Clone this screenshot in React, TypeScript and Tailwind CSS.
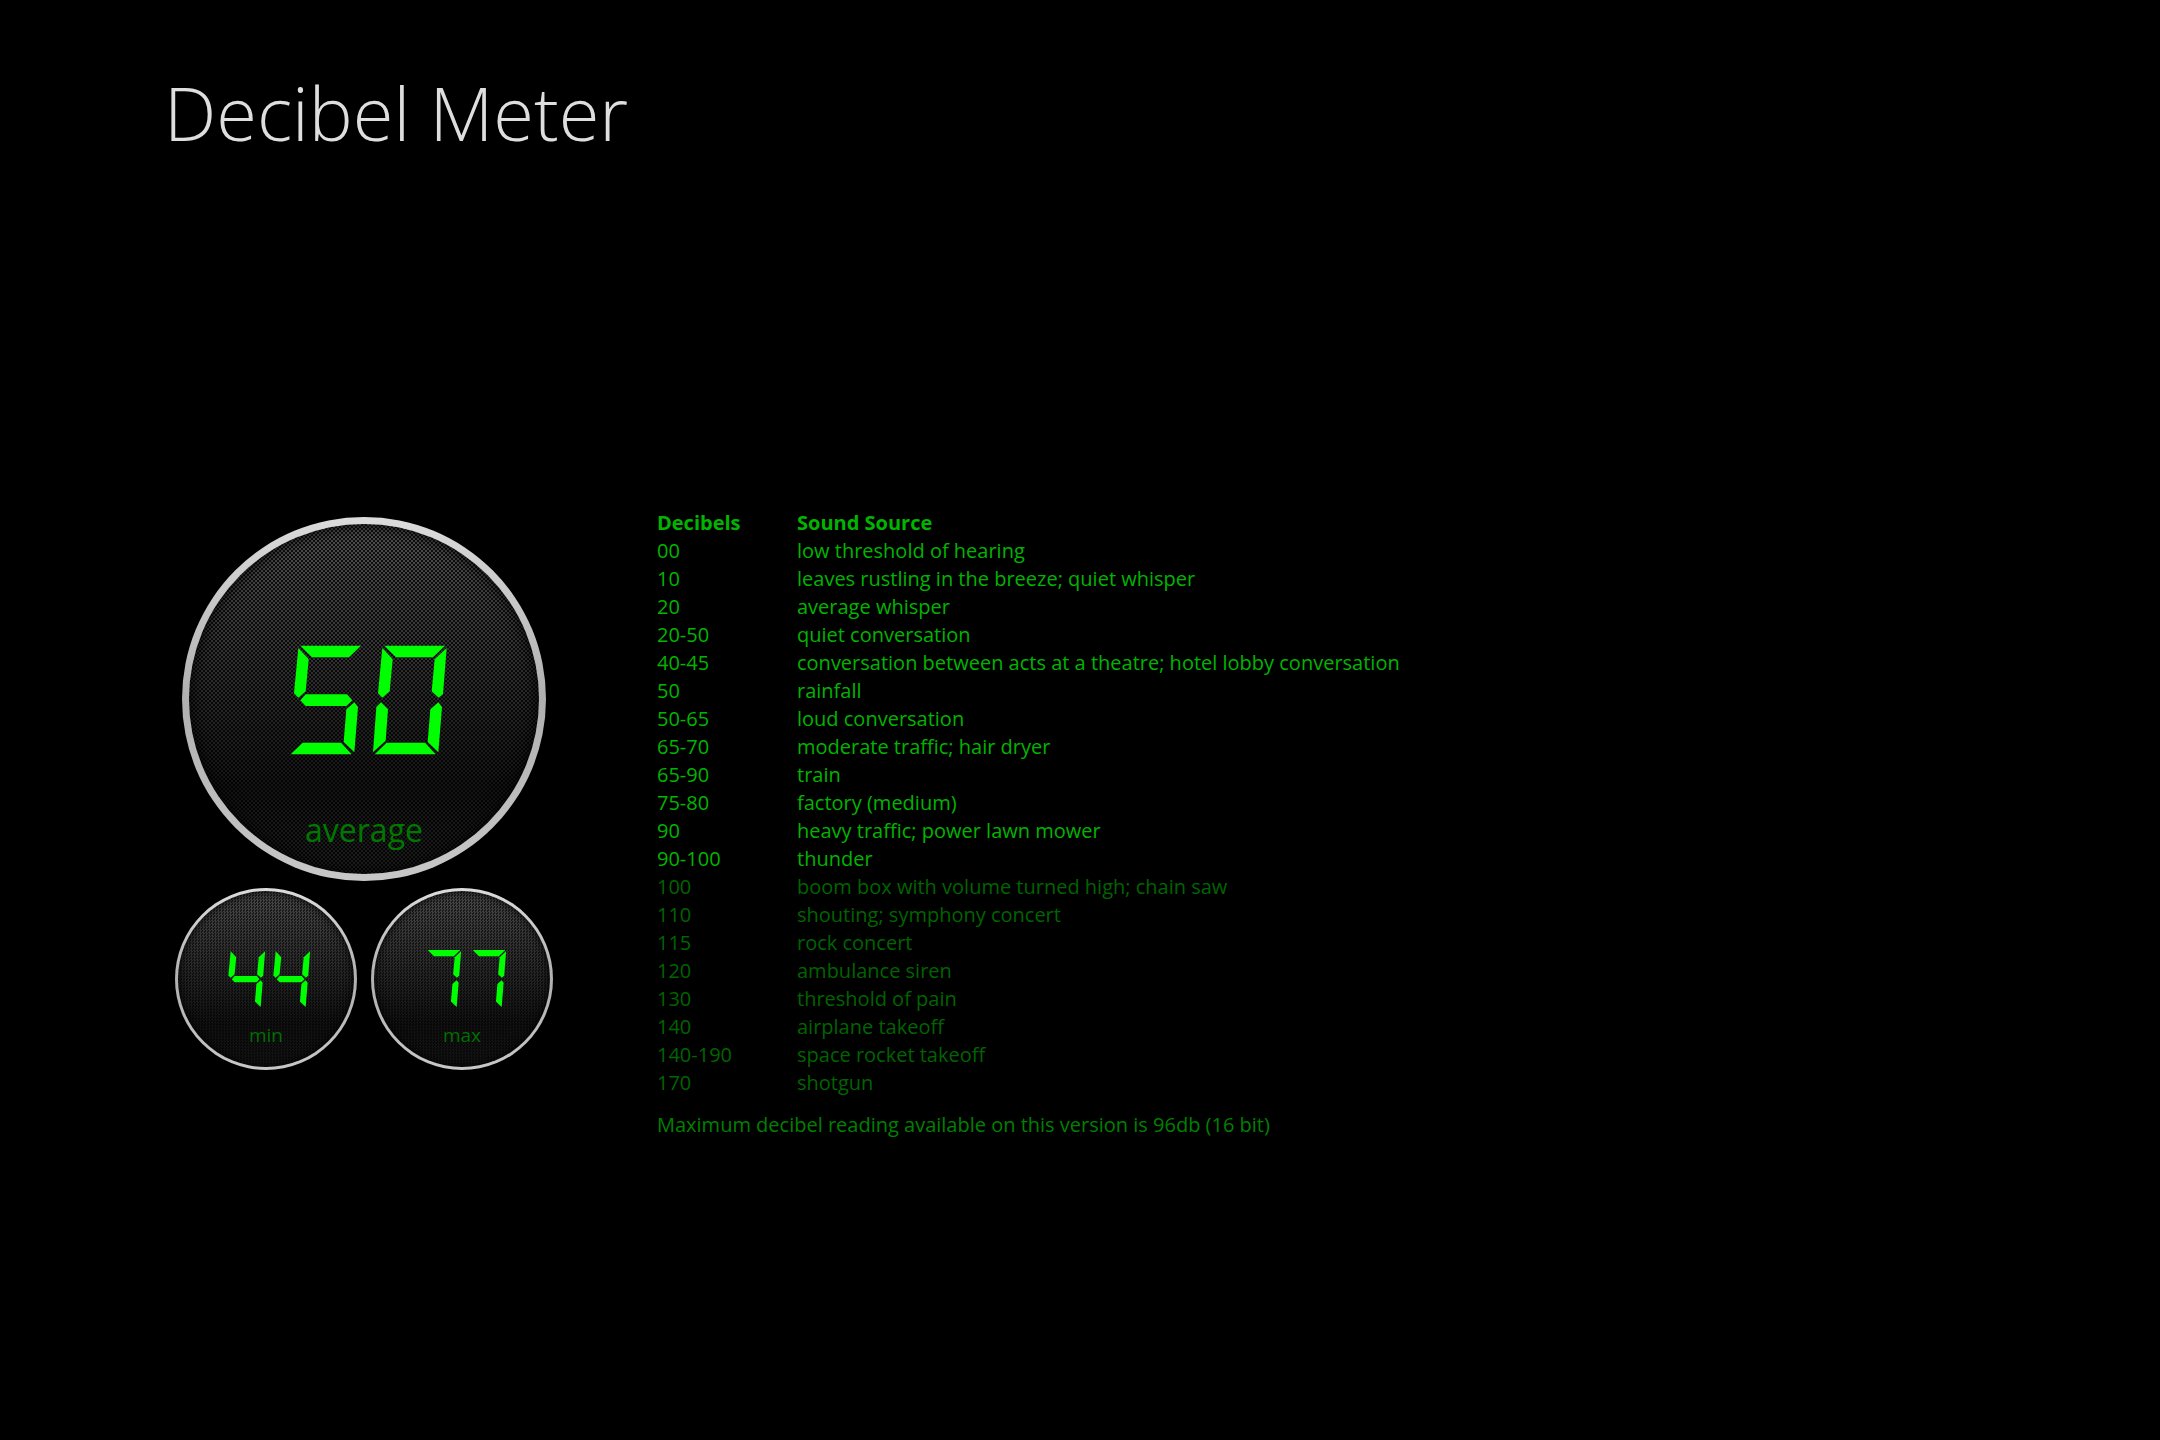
const bars: Record<string, string> = {
  a: "49,5 231,5 195,40 84,40",
  b: "236,12 225,150 212,161 191,142 200,46",
  c: "211,175 222,189 211,325 179,294 187,196",
  d: "56,296 171,296 203,331 20,331",
  e: "39,175 60,196 53,290 15,325 25,189",
  f: "43,12 74,46 65,142 43,161 30,148",
  g: "49,169 65,151 189,151 205,169 187,186 65,186",
};

const lit: Record<string, string> = {
  "0": "abcdef",
  "1": "bc",
  "2": "abdeg",
  "3": "abcdg",
  "4": "bcfg",
  "5": "acdfg",
  "6": "acdefg",
  "7": "abc",
  "8": "abcdefg",
  "9": "abcdfg",
};

function SegmentReadout({ value, className }: { value: string; className: string }) {
  return (
    <svg viewBox="0 0 504 336" role="img" aria-label={value} className={className}>
      {value.split("").map((digit, i) => (
        <g key={i} transform={`translate(${i * 252} 0)`} fill="#00ff00">
          {lit[digit].split("").map((bar) => (
            <polygon key={bar} points={bars[bar]} />
          ))}
        </g>
      ))}
    </svg>
  );
}

const rim = "rounded-full bg-linear-to-b from-[#dcdcdc] via-[#b0b0b0] to-[#c8c8c8]";
const largeWeave =
  "bg-[conic-gradient(#0000_25%,#000c_0_50%,#0000_0_75%,#000c_0),linear-gradient(#505050,#141414_75%,#1e1e1e)] bg-[size:4px_4px,100%_100%]";
const smallWeave =
  "bg-[conic-gradient(#0000_25%,#0009_0_50%,#0000_0_75%,#0009_0),linear-gradient(#484848,#101010_75%,#141414)] bg-[size:3px_3px,100%_100%]";

function SmallGauge({ value, label }: { value: string; label: string }) {
  return (
    <div className={`size-[182px] p-[3px] ${rim}`}>
      <div className={`flex size-full flex-col items-center rounded-full pt-[58px] shadow-[inset_0_0_10px_#000] ${smallWeave}`}>
        <SegmentReadout value={value} className="ml-1 h-[60px] w-[90px]" />
        <span className="mt-3 text-[19px] leading-7 text-[#006e00]">{label}</span>
      </div>
    </div>
  );
}

const levels: [string, string][] = [
  ["00", "low threshold of hearing"],
  ["10", "leaves rustling in the breeze; quiet whisper"],
  ["20", "average whisper"],
  ["20-50", "quiet conversation"],
  ["40-45", "conversation between acts at a theatre; hotel lobby conversation"],
  ["50", "rainfall"],
  ["50-65", "loud conversation"],
  ["65-70", "moderate traffic; hair dryer"],
  ["65-90", "train"],
  ["75-80", "factory (medium)"],
  ["90", "heavy traffic; power lawn mower"],
  ["90-100", "thunder"],
  ["100", "boom box with volume turned high; chain saw"],
  ["110", "shouting; symphony concert"],
  ["115", "rock concert"],
  ["120", "ambulance siren"],
  ["130", "threshold of pain"],
  ["140", "airplane takeoff"],
  ["140-190", "space rocket takeoff"],
  ["170", "shotgun"],
];

const measurable = 12;

export default function App() {
  return (
    <main className="min-h-screen bg-black px-41 pt-14 pb-14 font-['Open_Sans',sans-serif]">
      <h1 className="text-[74px] leading-[114px] font-light text-[#dedede]">Decibel Meter</h1>
      <div className="mt-[339px] flex items-start gap-26">
        <section aria-label="Readings" className="ml-[11px] flex shrink-0 flex-col items-center gap-[7px] pt-2">
          <div className={`size-[364px] p-[7px] ${rim}`}>
            <div className={`flex size-full flex-col items-center rounded-full pt-[120px] shadow-[inset_0_0_16px_#000] ${largeWeave}`}>
              <SegmentReadout value="50" className="ml-2 h-28 w-[168px]" />
              <span className="mt-13 text-[32px] leading-11 text-[#007800]">average</span>
            </div>
          </div>
          <div className="flex gap-3.5">
            <SmallGauge value="44" label="min" />
            <SmallGauge value="77" label="max" />
          </div>
        </section>
        <section aria-label="Sound levels" className="text-xl leading-7">
          <table className="text-left">
            <thead className="text-[#00b400]">
              <tr>
                <th className="w-35 p-0 font-bold">Decibels</th>
                <th className="p-0 font-bold">Sound Source</th>
              </tr>
            </thead>
            <tbody>
              {levels.map(([range, source], i) => (
                <tr key={range + source} className={i < measurable ? "text-[#00b400]" : "text-[#006400]"}>
                  <td className="p-0">{range}</td>
                  <td className="p-0">{source}</td>
                </tr>
              ))}
            </tbody>
          </table>
          <p className="mt-3.5 text-[#008000]">Maximum decibel reading available on this version is 96db (16 bit)</p>
        </section>
      </div>
    </main>
  );
}
